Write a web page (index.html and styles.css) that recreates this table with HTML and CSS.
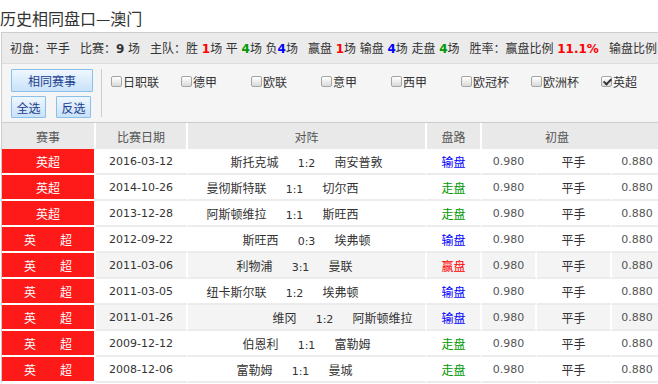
FILE: index.html
```html
<!DOCTYPE html>
<html>
<head>
    <meta charset="utf-8">
    <title>历史相同盘口—澳门</title>
    <link rel="stylesheet" href="styles.css">
</head>
<body>
    <h2 class="title">历史相同盘口—澳门</h2>
    <div class="panel">
        <div class="stat">
            <span>初盘：平手</span>
            <span>比赛：<b>9</b> 场</span>
            <span>主队：胜 <b class="r">1</b>场 平 <b class="g">4</b>场 负<b class="b">4</b>场</span>
            <span>赢盘 <b class="r">1</b>场 输盘 <b class="b">4</b>场 走盘 <b class="g">4</b>场</span>
            <span>胜率：赢盘比例 <b class="r">11.1%</b></span>
            <span>输盘比例</span>
        </div>
        <div class="filter">
            <div class="btns">
                <button type="button" class="btn btn-wide">相同赛事</button>
                <div class="btn-row">
                    <button type="button" class="btn">全选</button>
                    <button type="button" class="btn">反选</button>
                </div>
            </div>
            <div class="leagues">
                <label class="lg-check"><input type="checkbox"><i></i>日职联</label>
                <label class="lg-check"><input type="checkbox"><i></i>德甲</label>
                <label class="lg-check"><input type="checkbox"><i></i>欧联</label>
                <label class="lg-check"><input type="checkbox"><i></i>意甲</label>
                <label class="lg-check"><input type="checkbox"><i></i>西甲</label>
                <label class="lg-check"><input type="checkbox"><i></i>欧冠杯</label>
                <label class="lg-check"><input type="checkbox"><i></i>欧洲杯</label>
                <label class="lg-check"><input type="checkbox" checked><i></i>英超</label>
            </div>
        </div>
        <table class="his">
            <colgroup>
                <col class="c-lg">
                <col class="c-date">
                <col class="c-vs">
                <col class="c-pl">
                <col class="c-odds">
                <col class="c-pk">
                <col class="c-odds2">
            </colgroup>
            <tr>
                <th>赛事</th>
                <th>比赛日期</th>
                <th>对阵</th>
                <th>盘路</th>
                <th colspan="3" class="init">初盘</th>
            </tr>
            <tr>
                <td class="lg">英超</td>
                <td class="num">2016-03-12</td>
                <td><div class="vs"><span class="home">斯托克城</span><span class="score">1:2</span><span class="away">南安普敦</span></div></td>
                <td class="lose">输盘</td>
                <td class="num odds">0.980</td>
                <td>平手</td>
                <td class="num odds">0.880</td>
            </tr>
            <tr>
                <td class="lg">英超</td>
                <td class="num">2014-10-26</td>
                <td><div class="vs"><span class="home">曼彻斯特联</span><span class="score">1:1</span><span class="away">切尔西</span></div></td>
                <td class="draw">走盘</td>
                <td class="num odds">0.980</td>
                <td>平手</td>
                <td class="num odds">0.880</td>
            </tr>
            <tr>
                <td class="lg">英超</td>
                <td class="num">2013-12-28</td>
                <td><div class="vs"><span class="home">阿斯顿维拉</span><span class="score">1:1</span><span class="away">斯旺西</span></div></td>
                <td class="draw">走盘</td>
                <td class="num odds">0.980</td>
                <td>平手</td>
                <td class="num odds">0.880</td>
            </tr>
            <tr>
                <td class="lg">英　　超</td>
                <td class="num">2012-09-22</td>
                <td><div class="vs"><span class="home">斯旺西</span><span class="score">0:3</span><span class="away">埃弗顿</span></div></td>
                <td class="lose">输盘</td>
                <td class="num odds">0.980</td>
                <td>平手</td>
                <td class="num odds">0.880</td>
            </tr>
            <tr class="alt">
                <td class="lg">英　　超</td>
                <td class="num">2011-03-06</td>
                <td><div class="vs"><span class="home">利物浦</span><span class="score">3:1</span><span class="away">曼联</span></div></td>
                <td class="win">赢盘</td>
                <td class="num odds">0.980</td>
                <td>平手</td>
                <td class="num odds">0.880</td>
            </tr>
            <tr>
                <td class="lg">英　　超</td>
                <td class="num">2011-03-05</td>
                <td><div class="vs"><span class="home">纽卡斯尔联</span><span class="score">1:2</span><span class="away">埃弗顿</span></div></td>
                <td class="lose">输盘</td>
                <td class="num odds">0.980</td>
                <td>平手</td>
                <td class="num odds">0.880</td>
            </tr>
            <tr class="alt">
                <td class="lg">英　　超</td>
                <td class="num">2011-01-26</td>
                <td><div class="vs"><span class="home">维冈</span><span class="score">1:2</span><span class="away">阿斯顿维拉</span></div></td>
                <td class="lose">输盘</td>
                <td class="num odds">0.980</td>
                <td>平手</td>
                <td class="num odds">0.880</td>
            </tr>
            <tr>
                <td class="lg">英　　超</td>
                <td class="num">2009-12-12</td>
                <td><div class="vs"><span class="home">伯恩利</span><span class="score">1:1</span><span class="away">富勒姆</span></div></td>
                <td class="draw">走盘</td>
                <td class="num odds">0.980</td>
                <td>平手</td>
                <td class="num odds">0.880</td>
            </tr>
            <tr>
                <td class="lg">英　　超</td>
                <td class="num">2008-12-06</td>
                <td><div class="vs"><span class="home">富勒姆</span><span class="score">1:1</span><span class="away">曼城</span></div></td>
                <td class="draw">走盘</td>
                <td class="num odds">0.980</td>
                <td>平手</td>
                <td class="num odds">0.880</td>
            </tr>
        </table>
    </div>
</body>
</html>
```

FILE: styles.css
```css
* {
    margin: 0;
    padding: 0;
    box-sizing: border-box;
}

body {
    font-family: "Noto Sans CJK SC", sans-serif;
    font-size: 12px;
    color: #333;
    background: #fff;
    overflow: hidden;
}

.title {
    font-size: 16px;
    font-weight: normal;
    line-height: 24px;
    padding: 6px 0 2px;
}

.panel {
    width: 740px;
    margin-left: 1px;
    border-left: 1px solid #ccc;
}

/* summary bar */
.stat {
    display: flex;
    gap: 10px;
    height: 32px;
    padding-left: 8px;
    line-height: 30px;
    background: #ebebeb;
    border-top: 1px solid #ccc;
    border-bottom: 1px solid #ddd;
    white-space: nowrap;
    word-spacing: 1px;
}

.stat b {
    font-family: "DejaVu Sans", sans-serif;
    font-size: 12px;
}

.r { color: #f00; }
.g { color: #090; }
.b { color: #00f; }

/* league filter */
.filter {
    display: flex;
    height: 58px;
    padding: 5px 0 0 9px;
    background: #f5f5f5;
}

.btns {
    display: flex;
    flex-direction: column;
    gap: 4px;
    width: 82px;
}

.btn {
    height: 22px;
    border: 1px solid #88bfeb;
    border-radius: 1px;
    background: linear-gradient(#eef7ff, #c9e2f9);
    color: #1a3d8f;
    font-family: "Noto Sans CJK SC", sans-serif;
    font-size: 12px;
    cursor: pointer;
}

.btn-wide {
    width: 82px;
    height: 23px;
}

.btn-row {
    display: flex;
    gap: 10px;
}

.btn-row .btn {
    width: 35px;
}

.leagues {
    display: flex;
    align-items: flex-start;
    height: 48px;
    margin-left: 8px;
    padding-left: 9px;
    border-left: 1px solid #ccc;
}

.lg-check {
    display: flex;
    align-items: center;
    width: 70px;
    height: 25px;
    cursor: pointer;
}

.lg-check input {
    display: none;
}

.lg-check i {
    position: relative;
    width: 11px;
    height: 11px;
    margin-right: 1px;
    border: 1px solid #a5a5a5;
    border-radius: 2px;
    background: linear-gradient(#fff, #dadada);
}

.lg-check input:checked + i::after {
    content: "";
    position: absolute;
    left: 3px;
    top: 0;
    width: 3px;
    height: 6px;
    border: solid #333;
    border-width: 0 2px 2px 0;
    transform: rotate(45deg);
}

/* history table */
.his {
    width: 662px;
    table-layout: fixed;
    border-collapse: separate;
    border-spacing: 0;
    border-top: 1px solid #ccc;
}

.c-lg { width: 94px; }
.c-date { width: 92px; }
.c-vs { width: 239px; }
.c-pl { width: 55px; }
.c-odds { width: 55px; }
.c-pk { width: 75px; }
.c-odds2 { width: 52px; }

.his th {
    height: 26px;
    background: #e9e9e9;
    color: #555;
    font-weight: normal;
    border-right: 2px solid #fff;
}

.his th.init {
    text-align: left;
    padding-left: 63px;
}

.his td {
    height: 26px;
    text-align: center;
    white-space: nowrap;
    border-right: 2px solid #fff;
    border-bottom: 2px solid #ececec;
}

.his tr.alt td {
    background: #f4f4f4;
}

.his td.lg,
.his tr.alt td.lg {
    background: #ff1a1a;
    color: #fff;
    border-bottom-color: #fff;
}

.num {
    font-family: "DejaVu Sans", sans-serif;
    font-size: 11px;
}

.odds {
    color: #555;
}

.lose { color: #00f; }
.win { color: #f00; }
.draw { color: #090; }

.vs {
    display: flex;
    justify-content: center;
    align-items: baseline;
}

.vs .score {
    order: 2;
    width: 18px;
    margin: 0 19px;
    font-family: "DejaVu Sans", sans-serif;
    font-size: 11px;
}

.vs .home {
    order: 3;
    transform: translateX(calc(-100% - 56px));
}

.vs .away {
    order: 1;
    transform: translateX(calc(100% + 56px));
}
```
